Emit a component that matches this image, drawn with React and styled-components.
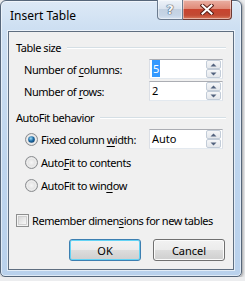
import React from "react";
import styled, { createGlobalStyle } from "styled-components";

const Global = createGlobalStyle`
  html, body { margin: 0; padding: 0; background: #ecedef; }
  body {
    font-family: "Noto Sans", "Open Sans", sans-serif;
    font-size: 11px;
    letter-spacing: -0.45px;
    color: #000;
  }
`;

const Window = styled.div`
  width: 240px;
  height: 275px;
  border: 1px solid #56667a;
  border-radius: 6px 6px 5px 5px;
  background: linear-gradient(#dde9f6 0px, #cddff2 28px, #bed5ee 60%, #b9d1ec 100%);
  box-shadow: 1px 1px 3px rgba(0, 0, 0, 0.35), inset 0 0 0 1px rgba(255, 255, 255, 0.55);
  display: flex;
  flex-direction: column;
  box-sizing: content-box;
`;

const TitleBar = styled.div`
  height: 30px;
  display: flex;
  align-items: center;
  padding-left: 9px;
`;

const Title = styled.div`
  font-size: 12px;
  letter-spacing: 0;
  color: #000;
  padding-bottom: 1px;
`;

const CaptionButtons = styled.div`
  margin-left: auto;
  margin-right: 9px;
  align-self: flex-start;
  margin-top: -1px;
  display: flex;
`;

const CaptionButton = styled.div`
  box-sizing: border-box;
  height: 20px;
  width: ${(p) => p.$w}px;
  border: 1px solid ${(p) => (p.$close ? "#6e3a34" : "#6b7b8f")};
  border-top: none;
  ${(p) => (p.$close ? "border-left: none;" : "")}
  border-radius: ${(p) => (p.$close ? "0 0 4px 0" : "0 0 0 4px")};
  background: ${(p) =>
    p.$close
      ? "linear-gradient(#eab0a4 0%, #e08a78 45%, #c8442f 50%, #c24a34 80%, #d97b5e 100%)"
      : "linear-gradient(#eef3f9 0%, #dbe4ef 45%, #c3d1e1 50%, #c6d5e6 80%, #d6e3f1 100%)"};
  box-shadow: inset 0 0 0 1px rgba(255, 255, 255, 0.45);
  display: flex;
  align-items: center;
  justify-content: center;
`;

const HelpGlyph = styled.span`
  font-family: "DejaVu Sans", sans-serif;
  font-weight: bold;
  font-size: 13px;
  letter-spacing: 0;
  line-height: 1;
  color: #f4f7fb;
  text-shadow: 0 0 1px #3d4c5f, 0 0 1px #3d4c5f, 0 0 1px #3d4c5f;
`;

const Client = styled.div`
  flex: 1;
  margin: 0 7px 6px;
  border: 1px solid #5f6e80;
  background: #f0f0f0;
  box-shadow: 0 0 0 1px rgba(255, 255, 255, 0.6);
  padding: 8px 7px 0;
  display: flex;
  flex-direction: column;
`;

const GroupHeader = styled.div`
  display: flex;
  align-items: center;
  height: 15px;
  margin-top: ${(p) => p.$mt || 0}px;
`;

const GroupLine = styled.div`
  flex: 1;
  margin-left: 6px;
  height: 1px;
  background: #d5dfe5;
  box-shadow: 0 1px 0 #fff;
`;

const FieldRow = styled.div`
  display: flex;
  align-items: center;
  height: 20px;
  padding-left: 8px;
  margin-right: 3px;
  margin-top: ${(p) => p.$mt || 0}px;
`;

const RadioRow = styled.div`
  display: flex;
  align-items: center;
  height: 20px;
  padding-left: 9px;
  margin-right: 3px;
  margin-top: ${(p) => p.$mt || 0}px;
  gap: 3px;
`;

const CheckRow = styled.div`
  display: flex;
  align-items: center;
  height: 20px;
  margin-top: ${(p) => p.$mt || 0}px;
  gap: 3px;
`;

const Label = styled.span`
  flex: 1;
  white-space: nowrap;
`;

const Key = styled.span`
  text-decoration: underline;
  text-underline-offset: 2px;
`;

const SpinBox = styled.div`
  box-sizing: border-box;
  width: 74px;
  height: 20px;
  border: 1px solid #dbdfe6;
  border-top-color: #abadb3;
  border-bottom-color: #e3e9ef;
  background: #fff;
  display: flex;
  align-items: center;
  letter-spacing: 0;
`;

const SpinText = styled.div`
  flex: 1;
  padding-left: 2px;
  line-height: 16px;
`;

const Selected = styled.span`
  background: #3399ff;
  color: #fff;
  padding: 1px 1px;
`;

const Spinner = styled.div`
  width: 15px;
  height: 18px;
  display: flex;
  flex-direction: column;
  margin-right: 1px;
`;

const SpinButton = styled.div`
  box-sizing: border-box;
  height: 9px;
  border: 1px solid #c2ccd8;
  border-radius: 2px;
  background: linear-gradient(#f5f6f8, #e4e7eb);
  display: flex;
  align-items: center;
  justify-content: center;
`;

const ButtonRow = styled.div`
  display: flex;
  justify-content: flex-end;
  gap: 12px;
  margin-top: 9px;
  margin-right: 1px;
`;

const Button = styled.div`
  box-sizing: border-box;
  width: 72px;
  height: 22px;
  border: 1px solid ${(p) => (p.$default ? "#3c7fb1" : "#707070")};
  border-radius: 3px;
  background: linear-gradient(#f2f2f2 0%, #ebebeb 50%, #dddddd 50%, #cfcfcf 100%);
  box-shadow: inset 0 0 0 1px ${(p) => (p.$default ? "#62d3f5" : "#fbfbfb")};
  display: flex;
  align-items: center;
  justify-content: center;
  letter-spacing: 0;
`;

const Arrow = ({ up }) => (
  <svg width="7" height="4" viewBox="0 0 7 4">
    <path d={up ? "M0.5 3.5 L3.5 0.5 L6.5 3.5 Z" : "M0.5 0.5 L3.5 3.5 L6.5 0.5 Z"} fill="#52627e" />
  </svg>
);

const Spin = ({ children }) => (
  <SpinBox>
    <SpinText>{children}</SpinText>
    <Spinner>
      <SpinButton>
        <Arrow up />
      </SpinButton>
      <SpinButton>
        <Arrow />
      </SpinButton>
    </Spinner>
  </SpinBox>
);

const Radio = ({ checked }) => (
  <svg width="13" height="13" viewBox="0 0 13 13">
    <defs>
      <radialGradient id="rbg" cx="50%" cy="50%" r="60%">
        <stop offset="0%" stopColor="#f6f6f6" />
        <stop offset="100%" stopColor="#d2d2d2" />
      </radialGradient>
      <radialGradient id="rdot" cx="40%" cy="35%" r="70%">
        <stop offset="0%" stopColor="#9fdcf6" />
        <stop offset="55%" stopColor="#1f6ea8" />
        <stop offset="100%" stopColor="#0d3f6e" />
      </radialGradient>
    </defs>
    <circle cx="6.5" cy="6.5" r="6" fill="url(#rbg)" stroke="#8a8d90" />
    <circle cx="6.5" cy="6.5" r="4.5" fill="none" stroke="#f4f4f4" strokeWidth="0.8" />
    {checked && <circle cx="6.5" cy="6.5" r="3.3" fill="url(#rdot)" />}
  </svg>
);

const Checkbox = () => (
  <svg width="13" height="13" viewBox="0 0 13 13">
    <defs>
      <linearGradient id="cbg" x1="0" y1="0" x2="1" y2="1">
        <stop offset="0%" stopColor="#d6d6d6" />
        <stop offset="100%" stopColor="#fbfbfb" />
      </linearGradient>
    </defs>
    <rect x="0.5" y="0.5" width="12" height="12" fill="#f4f4f4" stroke="#8e8f8f" />
    <rect x="2.5" y="2.5" width="8" height="8" fill="url(#cbg)" stroke="#c9c9c9" strokeWidth="0.8" />
  </svg>
);

const CloseX = () => (
  <svg width="14" height="11" viewBox="0 0 14 11">
    <path d="M2.5 1.5 L11.5 9.5 M11.5 1.5 L2.5 9.5" stroke="#5a1f18" strokeWidth="4" strokeLinecap="square" />
    <path d="M2.5 1.5 L11.5 9.5 M11.5 1.5 L2.5 9.5" stroke="#ffffff" strokeWidth="2" strokeLinecap="square" />
  </svg>
);

export default function App() {
  return (
    <>
      <Global />
      <Window>
        <TitleBar>
          <Title>Insert Table</Title>
          <CaptionButtons>
            <CaptionButton $w={26}>
              <HelpGlyph>?</HelpGlyph>
            </CaptionButton>
            <CaptionButton $w={49} $close>
              <CloseX />
            </CaptionButton>
          </CaptionButtons>
        </TitleBar>
        <Client>
          <GroupHeader>
            <span>Table size</span>
            <GroupLine />
          </GroupHeader>
          <FieldRow $mt={4}>
            <Label>
              Number of <Key>c</Key>olumns:
            </Label>
            <Spin>
              <Selected>5</Selected>
            </Spin>
          </FieldRow>
          <FieldRow $mt={2}>
            <Label>
              Number of <Key>r</Key>ows:
            </Label>
            <Spin>2</Spin>
          </FieldRow>
          <GroupHeader $mt={9}>
            <span>AutoFit behavior</span>
            <GroupLine />
          </GroupHeader>
          <RadioRow $mt={4}>
            <Radio checked />
            <Label>
              Fixed column <Key>w</Key>idth:
            </Label>
            <Spin>Auto</Spin>
          </RadioRow>
          <RadioRow $mt={3}>
            <Radio />
            <Label>
              Auto<Key>F</Key>it to contents
            </Label>
          </RadioRow>
          <RadioRow $mt={3}>
            <Radio />
            <Label>
              AutoFit to win<Key>d</Key>ow
            </Label>
          </RadioRow>
          <CheckRow $mt={15}>
            <Checkbox />
            <Label>
              Remember dimen<Key>s</Key>ions for new tables
            </Label>
          </CheckRow>
          <ButtonRow>
            <Button $default>OK</Button>
            <Button>Cancel</Button>
          </ButtonRow>
        </Client>
      </Window>
    </>
  );
}
